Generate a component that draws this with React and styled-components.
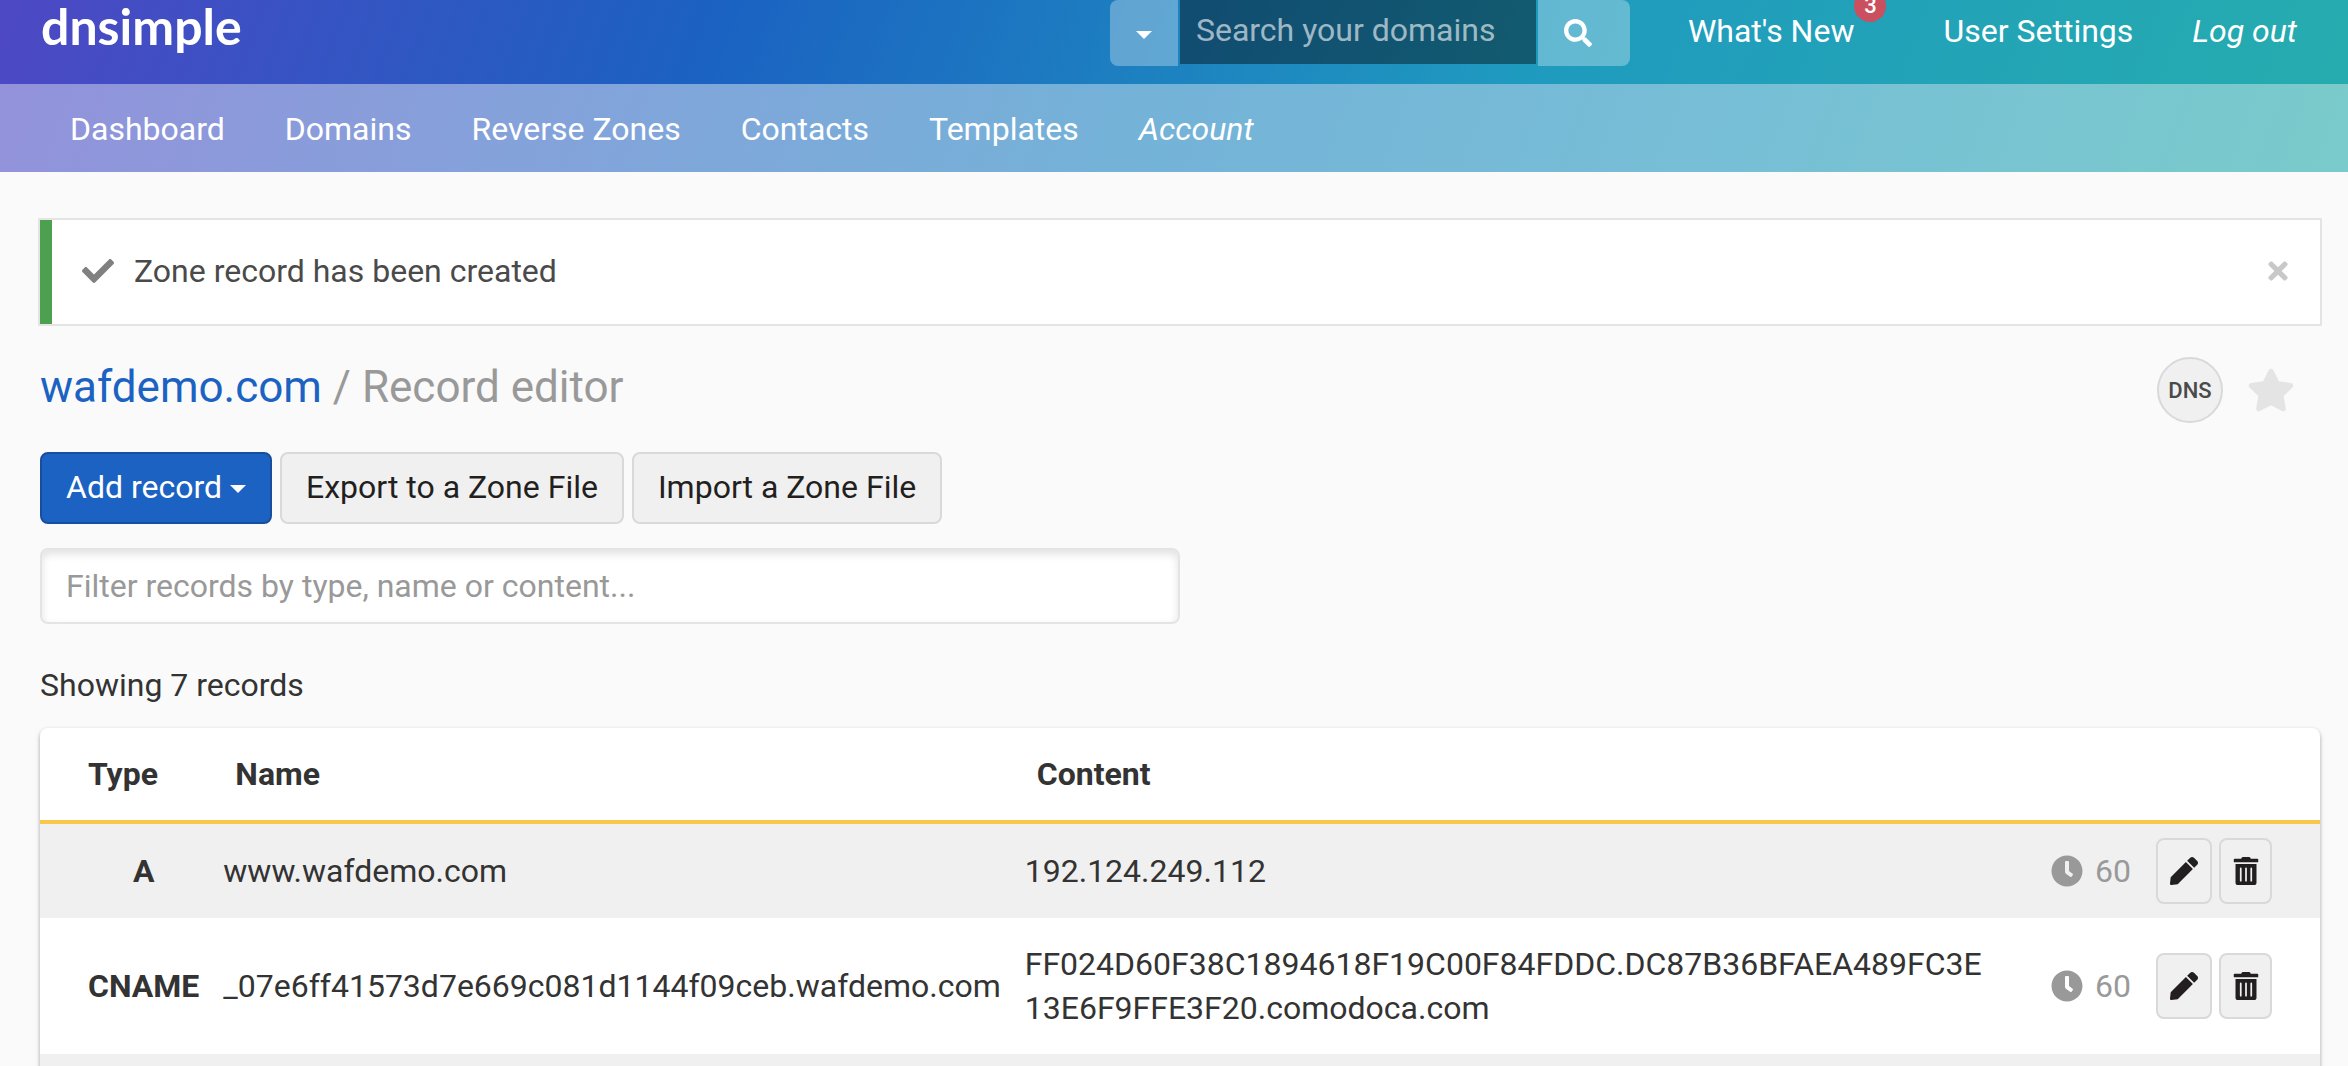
import React, { useState } from "react";
import styled, { createGlobalStyle } from "styled-components";
import {
  FaCheck,
  FaClock,
  FaPen,
  FaSearch,
  FaStar,
  FaTimes,
  FaTrashAlt,
} from "react-icons/fa";

const GlobalStyle = createGlobalStyle`
  * {
    box-sizing: border-box;
  }

  body {
    margin: 0;
    background: #fafafa;
    color: #333;
    font-family: Roboto, "Liberation Sans", sans-serif;
    font-size: 32px;
    line-height: 44px;
  }

  button, input {
    font: inherit;
  }

  a {
    color: inherit;
    text-decoration: none;
  }
`;

// Header
const Header = styled.header`
  background: linear-gradient(110deg, #4e48c4 0%, #1b62c2 30%, #1f9abf 64%, #26adae 100%);
  color: #fff;
`;

const TopBar = styled.div`
  display: flex;
  align-items: flex-start;
  justify-content: space-between;
  height: 84px;
  padding: 0 51px 0 41px;
`;

const Logo = styled.a`
  font-family: Lato, sans-serif;
  font-size: 50px;
  font-weight: 700;
  line-height: 52px;
`;

const TopRight = styled.div`
  display: flex;
  align-items: flex-start;
`;

const SearchForm = styled.form`
  display: flex;
  align-items: flex-start;
  gap: 2px;
  margin-right: 58px;
`;

const SearchButton = styled.button`
  display: flex;
  align-items: center;
  justify-content: center;
  width: ${(props) => props.$width};
  height: 66px;
  padding: ${(props) => props.$padding || "0"};
  border: none;
  border-radius: ${(props) => props.$radius};
  background: rgba(255, 255, 255, 0.3);
  color: #fff;
  cursor: pointer;
`;

const SearchInput = styled.input`
  width: 356px;
  height: 64px;
  padding: 0 16px 4px;
  border: none;
  border-radius: 0;
  background: rgba(0, 0, 0, 0.41);
  color: #fff;

  &::placeholder {
    color: rgba(255, 255, 255, 0.6);
    opacity: 1;
  }
`;

const Caret = styled.span`
  display: inline-block;
  margin-top: 4px;
  border: 8px solid transparent;
  border-top-color: currentColor;
  border-bottom: none;
`;

const UserNav = styled.nav`
  display: flex;
  gap: 59px;
  padding-top: 9px;
`;

const UserLink = styled.a`
  position: relative;
  font-style: ${(props) => (props.$italic ? "italic" : "normal")};
  margin-right: ${(props) => (props.$badged ? "30px" : "0")};
`;

const Badge = styled.span`
  position: absolute;
  top: -19px;
  left: 100%;
  width: 32px;
  height: 32px;
  border-radius: 50%;
  background: #ca4f5f;
  font-size: 22px;
  font-weight: 500;
  line-height: 32px;
  text-align: center;
`;

const MainNav = styled.nav`
  display: flex;
  gap: 60px;
  padding: 23px 70px 21px;
  background: linear-gradient(110deg, #9392db 0%, #7fa7da 30%, #74b2d8 48%, #77bfd6 74%, #7acbcb 100%);
`;

const NavLink = styled.a`
  font-style: ${(props) => (props.$italic ? "italic" : "normal")};
`;

// Page content
const Main = styled.main`
  padding: 48px 28px 0 40px;
`;

const Alert = styled.div`
  display: flex;
  align-items: center;
  height: 104px;
  padding: 0 28px 2px 30px;
  border-left: 12px solid #4ca04f;
  background: #fff;
  box-shadow: 0 0 0 2px #e4e4e4;
  color: #4a4a4a;
`;

const AlertText = styled.p`
  flex: 1;
  margin: 0 0 0 20px;
`;

const CloseButton = styled.button`
  display: flex;
  padding: 0;
  border: none;
  background: none;
  color: #c8c8c8;
  cursor: pointer;
`;

const TitleRow = styled.div`
  display: flex;
  align-items: flex-start;
  justify-content: space-between;
  margin-top: 33px;
  padding-right: 25px;
`;

const Title = styled.h1`
  margin: 0;
  color: #999;
  font-size: 44px;
  font-weight: 400;
  line-height: 60px;

  a {
    color: #1b62c2;
  }
`;

const TitleTools = styled.div`
  display: flex;
  align-items: center;
  gap: 24px;
`;

const DnsTag = styled.span`
  width: 66px;
  height: 66px;
  border: 2px solid #d9d9d9;
  border-radius: 50%;
  background: #f0f0f0;
  color: #4a4a4a;
  font-size: 22px;
  font-weight: 500;
  line-height: 64px;
  text-align: center;
`;

const StarButton = styled(CloseButton)`
  color: #e4e4e4;
`;

const Actions = styled.div`
  display: flex;
  gap: 8px;
  margin-top: 29px;
`;

const Button = styled.button`
  display: flex;
  align-items: center;
  gap: 8px;
  height: 72px;
  padding: 0 24px 2px;
  border: 2px solid ${(props) => (props.$primary ? "#174f9e" : "#d9d9d9")};
  border-radius: 8px;
  background: ${(props) => (props.$primary ? "#1b62c2" : "#f0f0f0")};
  color: ${(props) => (props.$primary ? "#fff" : "#231f20")};
  cursor: pointer;
`;

const FilterInput = styled.input`
  display: block;
  width: 50%;
  height: 76px;
  margin-top: 24px;
  padding: 0 24px;
  border: 2px solid #e4e4e4;
  border-radius: 8px;
  background: #fff;
  box-shadow: inset 0 4px 8px rgba(0, 0, 0, 0.12);

  &::placeholder {
    color: #999;
    opacity: 1;
  }
`;

const Count = styled.p`
  margin: 39px 0 21px;
`;

// Records table
const Card = styled.div`
  overflow: hidden;
  border-radius: 8px 8px 0 0;
  background: #fff;
  box-shadow: 0 2px 4px rgba(0, 0, 0, 0.35);
`;

const Table = styled.table`
  width: 100%;
  border-collapse: separate;
  border-spacing: 0;
`;

const HeadCell = styled.th`
  height: 96px;
  padding: 0 24px;
  border-bottom: 4px solid #f8c84a;
  text-align: left;

  &:first-child {
    padding-left: 48px;
  }
`;

const Row = styled.tr`
  background: #fff;

  &:nth-child(odd) {
    background: #f0f0f0;
  }
`;

const Cell = styled.td`
  padding: ${(props) => (props.$tight ? "14px 12px" : "24px 12px")};
  white-space: nowrap;
`;

const TypeCell = styled.th`
  width: 171px;
  padding: 0 12px 0 48px;
  text-align: center;
`;

const ContentCell = styled(Cell)`
  width: 100%;
  padding-right: 48px;
  white-space: normal;
  word-break: break-all;
`;

const RowTools = styled.div`
  display: flex;
  align-items: center;
  gap: 7px;
  padding-right: 36px;
`;

const Ttl = styled.span`
  display: flex;
  align-items: center;
  gap: 12px;
  margin-right: 18px;
  color: #999;
`;

const IconButton = styled.button`
  display: flex;
  align-items: center;
  justify-content: center;
  width: ${(props) => props.$width};
  height: 66px;
  padding: 0;
  border: 2px solid #d9d9d9;
  border-radius: 8px;
  background: #f0f0f0;
  color: #231f20;
  cursor: pointer;
`;

const records = [
  { id: 1, type: "A", name: "www.wafdemo.com", content: "192.124.249.112", ttl: 60 },
  {
    id: 2,
    type: "CNAME",
    name: "_07e6ff41573d7e669c081d1144f09ceb.wafdemo.com",
    content: "FF024D60F38C1894618F19C00F84FDDC.DC87B36BFAEA489FC3E13E6F9FFE3F20.comodoca.com",
    ttl: 60,
  },
];

const links = ["Dashboard", "Domains", "Reverse Zones", "Contacts", "Templates"];

function App() {
  const [showAlert, setShowAlert] = useState(true);
  const [filter, setFilter] = useState("");

  const visible = records.filter((r) =>
    `${r.type} ${r.name} ${r.content}`.toLowerCase().includes(filter.toLowerCase())
  );

  return (
    <>
      <GlobalStyle />
      <Header>
        <TopBar>
          <Logo href="#">dnsimple</Logo>
          <TopRight>
            <SearchForm onSubmit={(e) => e.preventDefault()}>
              <SearchButton type="button" aria-label="Search scope" $width="68px" $radius="8px 0 0 8px">
                <Caret />
              </SearchButton>
              <SearchInput aria-label="Search your domains" placeholder="Search your domains" />
              <SearchButton
                type="submit"
                aria-label="Search"
                $width="92px"
                $radius="0 8px 8px 0"
                $padding="0 12px 0 0"
              >
                <FaSearch size={28} />
              </SearchButton>
            </SearchForm>
            <UserNav>
              <UserLink href="#" $badged>
                What's New
                <Badge>3</Badge>
              </UserLink>
              <UserLink href="#">User Settings</UserLink>
              <UserLink href="#" $italic>Log out</UserLink>
            </UserNav>
          </TopRight>
        </TopBar>
        <MainNav>
          {links.map((link) => (
            <NavLink key={link} href="#">{link}</NavLink>
          ))}
          <NavLink href="#" $italic>Account</NavLink>
        </MainNav>
      </Header>

      <Main>
        {showAlert && (
          <Alert role="status">
            <FaCheck size={32} color="#808080" />
            <AlertText>Zone record has been created</AlertText>
            <CloseButton aria-label="Close" onClick={() => setShowAlert(false)}>
              <FaTimes size={28} />
            </CloseButton>
          </Alert>
        )}

        <TitleRow>
          <Title>
            <a href="#">wafdemo.com</a> / Record editor
          </Title>
          <TitleTools>
            <DnsTag>DNS</DnsTag>
            <StarButton aria-label="Star domain">
              <FaStar size={48} />
            </StarButton>
          </TitleTools>
        </TitleRow>

        <Actions>
          <Button $primary>
            Add record
            <Caret />
          </Button>
          <Button>Export to a Zone File</Button>
          <Button>Import a Zone File</Button>
        </Actions>

        <FilterInput
          aria-label="Filter records"
          placeholder="Filter records by type, name or content..."
          value={filter}
          onChange={(e) => setFilter(e.target.value)}
        />

        <Count>Showing 7 records</Count>

        <Card>
          <Table>
            <thead>
              <tr>
                <HeadCell>Type</HeadCell>
                <HeadCell>Name</HeadCell>
                <HeadCell>Content</HeadCell>
                <HeadCell aria-label="Actions" />
              </tr>
            </thead>
            <tbody>
              {visible.map((r) => (
                <Row key={r.id}>
                  <TypeCell scope="row">{r.type}</TypeCell>
                  <Cell>{r.name}</Cell>
                  <ContentCell>{r.content}</ContentCell>
                  <Cell $tight>
                    <RowTools>
                      <Ttl>
                        <FaClock size={32} />
                        {r.ttl}
                      </Ttl>
                      <IconButton aria-label="Edit record" $width="56px">
                        <FaPen size={28} />
                      </IconButton>
                      <IconButton aria-label="Delete record" $width="53px">
                        <FaTrashAlt size={28} />
                      </IconButton>
                    </RowTools>
                  </Cell>
                </Row>
              ))}
              <Row>
                <Cell colSpan={4} />
              </Row>
            </tbody>
          </Table>
        </Card>
      </Main>
    </>
  );
}

export default App;
